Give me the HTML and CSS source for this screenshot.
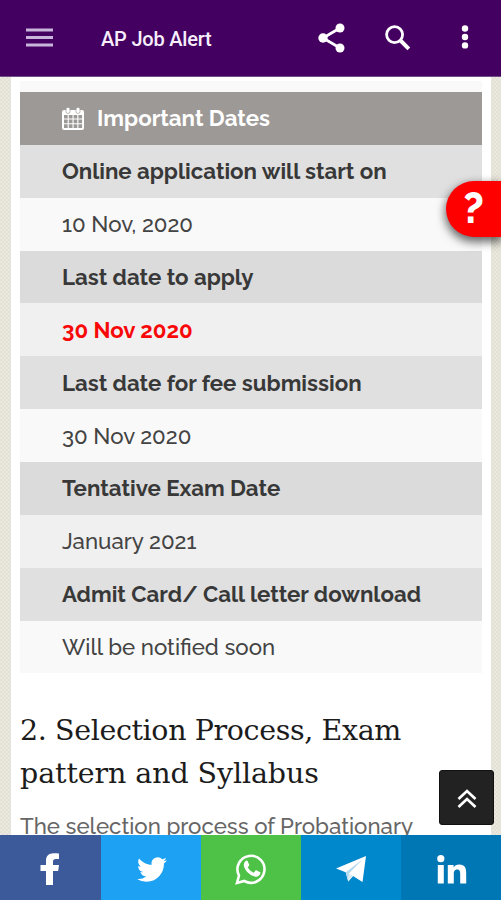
FILE: index.html
```
<!DOCTYPE html>
<html lang="en">
<head>
<meta charset="utf-8">
<title>AP Job Alert</title>
<link rel="stylesheet" href="styles.css">
</head>
<body>
<div class="app">
  <header class="appbar">
    <svg class="menu" viewBox="0 0 28 20"><path d="M0 2h27M0 9.5h27M0 17h27" stroke="#c9b5db" stroke-width="3"/></svg>
    <h1>AP Job Alert</h1>
    <svg class="share" viewBox="0 0 28 30"><path d="M22 5 5 15l17 10" fill="none" stroke="#fff" stroke-width="2.8"/><g fill="#fff"><circle cx="22" cy="5" r="4.5"/><circle cx="5" cy="15" r="4.7"/><circle cx="22" cy="25" r="4.5"/></g></svg>
    <svg class="search" viewBox="0 0 26 26"><circle cx="9.6" cy="9.6" r="8" fill="none" stroke="#fff" stroke-width="2.8"/><path d="m15.5 15.5 8.3 8.3" stroke="#fff" stroke-width="3.9"/></svg>
    <svg class="more" viewBox="0 0 8 24"><g fill="#fff"><circle cx="4" cy="3.5" r="3.2"/><circle cx="4" cy="12" r="3.2"/><circle cx="4" cy="20.4" r="3.2"/></g></svg>
  </header>
  <main class="page">
    <article class="content">
      <div class="dates">
        <div class="row title">
          <svg class="calendar" viewBox="0 0 22 23"><rect y="3" width="22" height="20" rx="2" fill="#fff"/><g fill="#fff" stroke="#9d9997" stroke-width=".7"><rect x="4" y=".4" width="4" height="6" rx="1.7"/><rect x="14" y=".4" width="4" height="6" rx="1.7"/></g><g fill="#9d9997"><path d="M2 8h3.7v3.4H2zM6.8 8h3.7v3.4H6.8zM11.6 8h3.7v3.4h-3.7zM16.4 8h3.7v3.4h-3.7zM2 12.500h3.7v3.7H2zM6.800 12.500h3.7v3.7H6.800zM11.600 12.500h3.7v3.7h-3.7zM16.400 12.500h3.7v3.7h-3.7zM2 17.300h3.7v3.7H2zM6.800 17.300h3.7v3.7H6.800zM11.600 17.300h3.7v3.7h-3.7zM16.400 17.300h3.7v3.7h-3.7z"/></g></svg>
          <span>Important Dates</span>
        </div>
        <div class="row label"><span>Online application will start on</span></div>
        <div class="row light"><span>10 Nov, 2020</span></div>
        <div class="row label dark"><span>Last date to apply</span></div>
        <div class="row deadline"><span>30 Nov 2020</span></div>
        <div class="row label"><span>Last date for fee submission</span></div>
        <div class="row light"><span>30 Nov 2020</span></div>
        <div class="row label dark"><span>Tentative Exam Date</span></div>
        <div class="row"><span>January 2021</span></div>
        <div class="row label"><span>Admit Card/ Call letter download</span></div>
        <div class="row light"><span>Will be notified soon</span></div>
      </div>
      <h2>2. Selection Process, Exam<br><span>pattern and Syllabus</span></h2>
      <p>The selection process of Probationary</p>
    </article>
    <div class="help">?</div>
    <div class="to-top"><svg viewBox="0 0 20 20"><path d="m1.500 10 8.500-8 8.500 8M1.500 18l8.500-8 8.500 8" fill="none" stroke="#fff" stroke-width="2.700"/></svg></div>
  </main>
  <nav class="social">
    <div class="facebook"><svg viewBox="0 0 20 32"><path d="M19 .5v5.500h-3c-2.300 0-3 .8-3 2.800V12h6l-.8 6H13v14H6V18H0.500V12H6V7.700C6 3 8.800.3 13.700.3c2 0 4.300.1 5.300.2z" fill="#fff"/></svg></div>
    <div class="twitter"><svg viewBox="0 0 24 24"><path d="M23.950 4.570a10 10 0 0 1-2.820.77 4.960 4.960 0 0 0 2.160-2.720c-.95.550-2 .95-3.130 1.180a4.920 4.920 0 0 0-8.380 4.480C7.690 8.090 4.070 6.130 1.640 3.160a4.920 4.920 0 0 0 1.520 6.570 4.900 4.900 0 0 1-2.230-.61v.06a4.920 4.920 0 0 0 3.950 4.830 5 5 0 0 1-2.210.08 4.940 4.940 0 0 0 4.600 3.420A9.870 9.870 0 0 1 0 19.540a13.990 13.990 0 0 0 7.550 2.210c9.050 0 14-7.500 14-13.980 0-.21 0-.42-.02-.63a9.940 9.940 0 0 0 2.420-2.570z" fill="#fff"/></svg></div>
    <div class="whatsapp"><svg viewBox="0 0 32 32"><path d="M2 30 4 22.500A13.500 13.500 0 1 1 9.300 28z" fill="none" stroke="#fff" stroke-width="2.600"/><path d="M10.700 8c.6-.6 1.600-.5 2 .3l1.400 3.200c.3.600-.1 1.200-1.300 2.700 1.500 2.800 3.500 4.500 6 5.500l1.700-2.100c.3-.4.700-.4 1.200-.2l3.100 1.500c.6.3.7.5.6 1.100-.4 2.500-2.600 3.900-5 3.700C14.700 23.100 8.700 16.500 8.800 12c0-1.500.8-3 1.900-4z" fill="#fff"/></svg></div>
    <div class="telegram"><svg viewBox="0 0 32 28"><path d="M1 13.500 31 1l-3.500 26-9.500-6-4.800 5.500-2.500-9.300z" fill="#fff"/><path d="m10.700 17.200 17-13L14 18.500l-.8 8z" fill="#b5d9ef"/><path d="m14 18.500 4 2.500-4.800 5.500z" fill="#d8ebf7"/></svg></div>
    <div class="linkedin"><svg viewBox="0 0 30 29"><g fill="#fff"><circle cx="3.800" cy="3.700" r="3.600"/><path d="M.8 10h6v18.500h-6zM10.800 10h5.800v2.600c1-1.700 3-3 5.700-3 5.700 0 6.900 3.700 6.900 8.700v10.200h-6v-9c0-2.300-.1-5-3-5-3.100 0-3.400 2.400-3.400 4.800v9.200h-6z"/></g></svg></div>
  </nav>
</div>
</body>
</html>
```
FILE: styles.css
```
* { box-sizing: border-box; }
body { margin: 0; font-family: Raleway, Lato, sans-serif; }
svg { display: block; flex: none; }
.app { width: 501px; height: 900px; display: flex; flex-direction: column; overflow: hidden; }
.appbar { flex: none; height: 77px; padding-left: 26px; background: #430061; border-bottom: 1px solid #705084; display: flex; align-items: center; }
.menu { width: 28px; height: 20px; }
.appbar h1 { width: 217px; margin: 1px 0 0 47px; font: 500 20px/28px Roboto, sans-serif; letter-spacing: -.2px; color: #f6effb; white-space: nowrap; }
.share { width: 28px; height: 30px; }
.search { width: 26px; height: 26px; margin-left: 39px; }
.more { width: 8px; height: 24px; margin-left: 50px; margin-top: -2px; }
.page { position: relative; flex: 1; min-height: 0; padding: 0 10px 0 11px; background: repeating-conic-gradient(#e3e1d5 0 25%, #ebe9df 0 50%) 0 0 / 4px 4px; }
.content { height: 758px; background: #fff; padding: 3px 9px 0; overflow: hidden; border-top: 1px solid #fff; }
.dates { border-top: 11px solid #f9f9f9; font-variant-numeric: oldstyle-nums; }
.row { height: 52.86px; padding-left: 42px; display: flex; align-items: center; background: #f0f0f0; color: #444; font-size: 22.25px; font-weight: 500; line-height: 30px; white-space: nowrap; }
.row.title { background: #9d9997; color: #fff; font-weight: 700; }
.calendar { width: 22px; height: 23px; margin-right: 13px; }
.row.label { background: #e0e0e0; color: #383838; font-weight: 700; }
.row.label.dark { background: #dbdbdb; }
.row.light { background: #f9f9f9; }
.row.deadline { color: #f80808; font-weight: 700; }
h2 { margin: 36px 0 0; font: 400 28.5px/43px "Roboto Slab", "DejaVu Serif", serif; letter-spacing: -.38px; color: #1c1c1c; white-space: nowrap; }
h2 span { letter-spacing: -.1px; }
p { margin: 16px 0 0; font-size: 22.25px; font-weight: 500; line-height: 30px; color: #666; white-space: nowrap; }
.help { position: absolute; top: 104px; right: 0; width: 55px; height: 56px; border-radius: 28px 0 0 28px; background: #f00; color: #fff; box-shadow: 0 4px 10px 1px #0009; font: 800 42px/56px Raleway, Lato, sans-serif; text-align: center; }
.to-top { position: absolute; top: 693px; right: 7px; width: 55px; height: 55px; border-radius: 3px; background: #222; border: 1px solid #111; display: flex; align-items: center; justify-content: center; padding-top: 3px; }
.to-top svg { width: 20px; height: 20px; }
.social { flex: none; height: 65px; display: grid; grid-template-columns: 101px repeat(4, 1fr); }
.social div { display: flex; align-items: center; justify-content: center; padding-top: 3px; }
.facebook { background: #3c5a99; }
.twitter { background: #1da1f2; }
.whatsapp { background: #4dc247; }
.telegram { background: #0088cc; }
.linkedin { background: #0077b5; }
.facebook svg { width: 20px; height: 32px; margin-right: 1px; }
.twitter svg { width: 30px; height: 31px; margin-left: 2px; }
.whatsapp svg { width: 32px; height: 32px; }
.telegram svg { width: 32px; height: 28px; }
.linkedin svg { width: 30px; height: 29px; margin-left: 1px; }
```
